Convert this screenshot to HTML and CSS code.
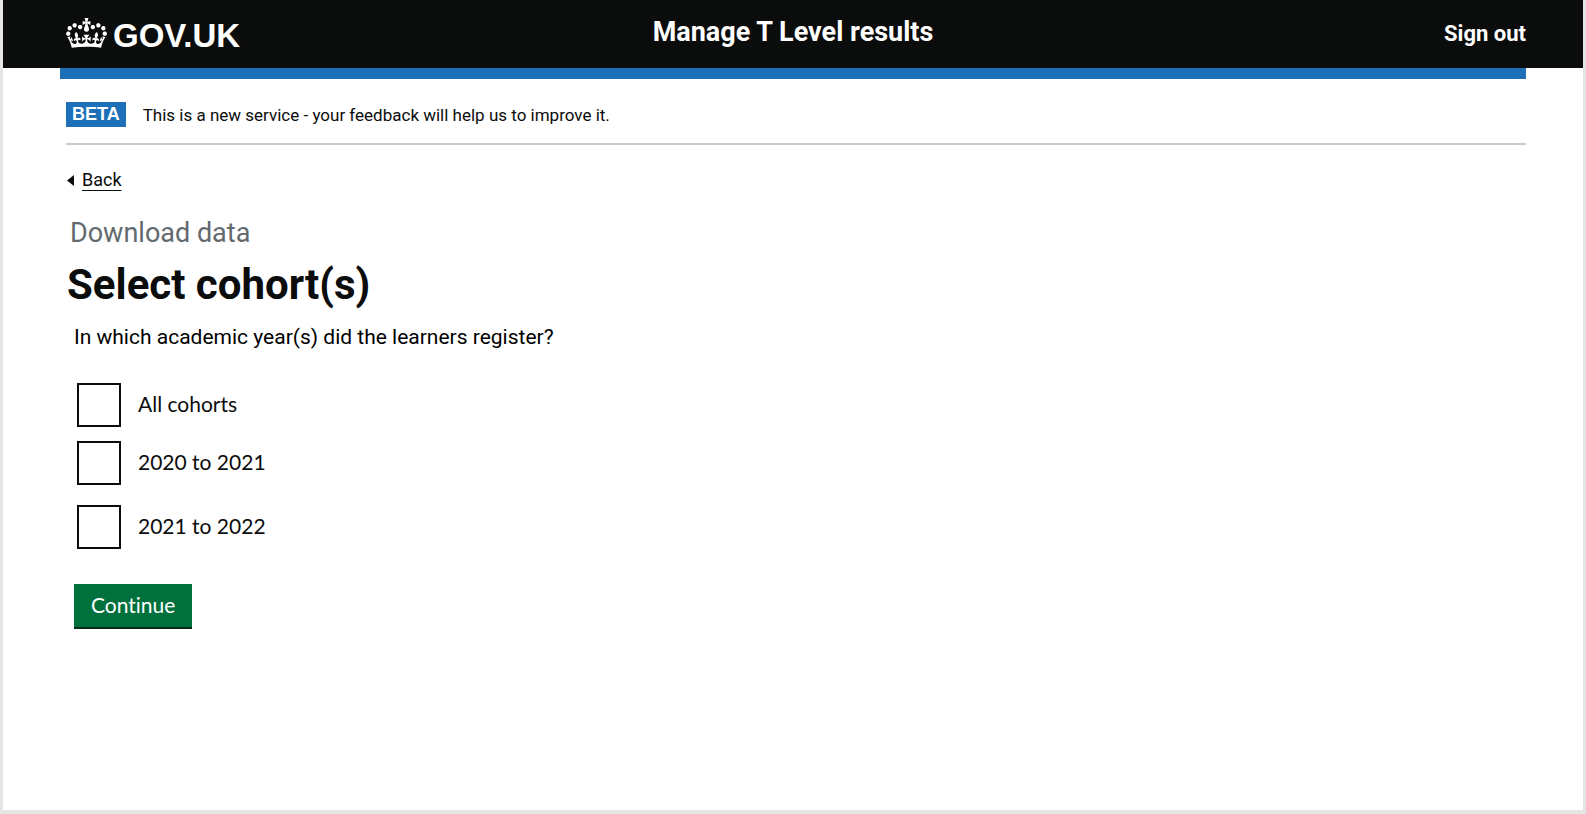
FILE: index.html
```html
<!DOCTYPE html>
<html lang="en">
<head>
<meta charset="utf-8">
<meta name="viewport" content="width=device-width, initial-scale=1">
<title>Select cohort(s) - Manage T Level results</title>
<link rel="stylesheet" href="styles.css">
</head>
<body class="page">
<header class="header">
  <div class="header-inner">
    <a class="logo" href="#">
      <svg class="crown" viewBox="0 0 132 97" aria-hidden="true"><path fill="currentColor" fill-rule="evenodd" d="M25 30.2c3.5 1.5 7.7-.2 9.1-3.7 1.5-3.6-.2-7.8-3.9-9.2-3.6-1.4-7.6.3-9.1 3.9-1.4 3.5.3 7.5 3.9 9zM9 39.5c3.6 1.5 7.8-.2 9.2-3.7 1.5-3.6-.2-7.8-3.9-9.1-3.6-1.5-7.6.2-9.1 3.8-1.4 3.5.3 7.5 3.8 9zM4.4 57.2c3.5 1.5 7.7-.2 9.1-3.8 1.5-3.6-.2-7.7-3.9-9.1-3.5-1.5-7.6.3-9.1 3.8-1.4 3.5.3 7.6 3.9 9.1zm38.3-21.4c3.5 1.5 7.7-.2 9.1-3.8 1.5-3.6-.2-7.7-3.9-9.1-3.6-1.5-7.6.3-9.1 3.8-1.3 3.6.4 7.7 3.9 9.1zm64.4-5.6c-3.6 1.5-7.8-.2-9.1-3.7-1.5-3.6.2-7.8 3.8-9.2 3.6-1.4 7.7.3 9.2 3.9 1.3 3.5-.4 7.5-3.9 9zm15.9 9.3c-3.6 1.5-7.7-.2-9.1-3.7-1.5-3.6.2-7.8 3.7-9.1 3.6-1.5 7.7.2 9.2 3.8 1.5 3.5-.3 7.5-3.8 9zm4.7 17.7c-3.6 1.5-7.8-.2-9.2-3.8-1.5-3.6.2-7.7 3.9-9.1 3.6-1.5 7.7.3 9.2 3.8 1.3 3.5-.4 7.6-3.9 9.1zM89.3 35.8c-3.6 1.5-7.8-.2-9.2-3.8-1.4-3.6.2-7.7 3.9-9.1 3.6-1.5 7.7.3 9.2 3.8 1.4 3.6-.3 7.7-3.9 9.1zM69.7 17.7l8.9 4.7V9.3l-8.9 2.8c-.2-.3-.5-.6-.9-.9L72.4 0H59.6l3.5 11.2c-.3.3-.6.5-.9.9l-8.8-2.8v13.1l8.8-4.7c.3.3.6.7.9.9l-5 15.4v.1c-.2.8-.4 1.6-.4 2.4 0 4.1 3.1 7.5 7 8.1h.2c.3 0 .7.1 1 .1.4 0 .7 0 1-.1h.2c4-.6 7.1-4.1 7.1-8.1 0-.8-.1-1.7-.4-2.4V34l-5.1-15.4c.4-.2.7-.6 1-.9zM66 92.8c16.9 0 32.8 1.1 47.1 3.2 4-16.9 8.9-26.7 14-33.5l-9.6-3.4c1 4.9 1.1 7.2 0 10.2-1.5-1.4-3-4.3-4.2-8.7L108.6 76c2.8-2 5-3.2 7.5-3.3-4.4 9.4-10 11.9-13.6 11.2-4.3-.8-6.3-4.6-5.6-7.9 1-4.7 5.7-5.9 8-.5 4.3-8.7-3-11.4-7.6-8.8 7.1-7.2 7.9-13.5 2.1-21.1-8 6.1-8.1 12.3-4.5 20.8-4.7-5.4-12.1-2.5-9.5 6.2 3.4-5.2 7.9-2 7.2 3.1-.6 4.3-6.4 7.8-13.5 7.2-10.3-.9-10.9-8-11.2-13.8 2.5-.5 7.1 1.8 11 7.3L80.2 60c-4.1 4.4-8 5.3-12.3 5.4 1.4-4.4 8-11.6 8-11.6H55.5s6.4 7.2 7.9 11.6c-4.2-.1-8-1-12.3-5.4l1.4 16.4c3.9-5.5 8.5-7.7 10.9-7.3-.3 5.8-.9 12.8-11.1 13.8-7.2.6-12.9-2.9-13.5-7.2-.7-5 3.8-8.3 7.1-3.1 2.7-8.7-4.6-11.6-9.4-6.2 3.7-8.5 3.6-14.7-4.6-20.8-5.8 7.6-5 13.9 2.2 21.1-4.7-2.6-11.9.1-7.7 8.8 2.3-5.5 7.1-4.2 8.1.5.7 3.3-1.3 7.1-5.7 7.9-3.5.7-9-1.8-13.5-11.2 2.5.1 4.7 1.3 7.5 3.3l-4.7-15.4c-1.2 4.4-2.7 7.2-4.3 8.7-1.1-3-.9-5.3 0-10.2l-9.5 3.4c5 6.9 9.9 16.7 14 33.5 14.8-2.1 30.8-3.2 47.7-3.2z"/></svg>
      <span>GOV.UK</span>
    </a>
    <a class="service-name" href="#">Manage T Level results</a>
    <a class="sign-out" href="#">Sign out</a>
  </div>
</header>
<div class="container">
  <div class="bar"></div>
  <div class="content">
    <div class="phase">
      <strong class="tag">BETA</strong>
      <span class="phase-text">This is a new service - your feedback will help us to improve it.</span>
    </div>
    <a class="back" href="#"><svg class="back-arrow" viewBox="0 0 7 11" aria-hidden="true"><path fill="currentColor" d="M7 0v11L0 5.500z"/></svg><span class="back-text">Back</span></a>
    <main class="main">
      <p class="caption">Download data</p>
      <h1 class="title">Select cohort(s)</h1>
      <form class="form">
        <fieldset class="cohorts">
          <legend class="question">In which academic year(s) did the learners register?</legend>
          <div class="choice"><input class="box" type="checkbox" id="all"><label class="label" for="all">All cohorts</label></div>
          <div class="choice"><input class="box" type="checkbox" id="y2020"><label class="label" for="y2020">2020 to 2021</label></div>
          <div class="choice choice-last"><input class="box" type="checkbox" id="y2021"><label class="label" for="y2021">2021 to 2022</label></div>
        </fieldset>
        <button class="button" type="button">Continue</button>
      </form>
    </main>
  </div>
</div>
</body>
</html>
```
FILE: styles.css
```css
*, *::before, *::after { box-sizing: border-box; }

.page {
  margin: 0;
  min-height: 100vh;
  border: solid #e5e5e5;
  border-width: 0 3px 4px;
  background: #fff;
  color: #0b0c0c;
  font-family: Roboto, "Liberation Sans", sans-serif;
}

.header {
  padding: 0 57px;
  background: #0b0c0c;
  color: #fff;
}

.header-inner {
  display: grid;
  grid-template-columns: 1fr auto 1fr;
  align-items: start;
  min-height: 68px;
  padding-top: 16px;
}

.header a {
  color: inherit;
  font-weight: 700;
  text-decoration: none;
}

.logo {
  display: flex;
  justify-self: start;
  gap: 6px;
  padding: 2px 0 0 6px;
  font: 33px/36px "Liberation Sans", Arial, sans-serif;
}

.crown {
  width: 41px;
  height: 30px;
}

.service-name {
  font-size: 27px;
  line-height: 32px;
}

.sign-out {
  justify-self: end;
  padding-top: 2px;
  font-size: 22px;
  line-height: 32px;
}

.container { margin: 0 57px; }

.bar {
  height: 11px;
  background: #1d70b8;
}

.content { padding-left: 6px; }

.phase {
  display: flex;
  align-items: flex-start;
  gap: 17px;
  padding: 23px 0 14px;
  border-bottom: 2px solid #c8c9ca;
  font-size: 17px;
  line-height: 27px;
}

.tag {
  padding: 0 6px;
  background: #1d70b8;
  color: #fff;
  font-family: "Liberation Sans", Arial, sans-serif;
  font-size: 18px;
  line-height: 25px;
}

.back {
  display: inline-flex;
  align-items: center;
  gap: 8px;
  margin-top: 25px;
  padding-left: 1px;
  color: inherit;
  font-size: 18px;
  line-height: 20px;
  text-decoration: none;
}

.back-arrow {
  width: 7px;
  height: 11px;
}

.back-text {
  text-decoration: underline;
  text-decoration-thickness: 1px;
  text-underline-offset: 4px;
}

.main { padding: 27px 0 32px; }

.caption {
  margin: 0 0 12px;
  padding-left: 4px;
  color: #626a6e;
  font-size: 27px;
  line-height: 32px;
}

.title {
  margin: 0 0 14px;
  padding-left: 1px;
  font-size: 42px;
  line-height: 48px;
}

.form { padding-left: 8px; }

.cohorts {
  min-width: 0;
  margin: 0;
  padding: 0;
  border: 0;
}

.question {
  padding: 0 0 32px;
  color: #000;
  font-size: 21px;
  line-height: 28px;
}

.choice {
  display: flex;
  align-items: center;
  gap: 17px;
  margin-bottom: 14px;
  padding-left: 3px;
}

.choice-last { padding-top: 6px; }

.box {
  appearance: none;
  width: 44px;
  height: 44px;
  margin: 0;
  border: 2px solid #0b0c0c;
  background: #fff;
}

.box:checked { box-shadow: inset 0 0 0 10px #fff; background: #0b0c0c; }

.label {
  padding-bottom: 2px;
  font-family: Lato, sans-serif;
  font-size: 21px;
  line-height: 28px;
}

.button {
  margin-top: 21px;
  padding: 7px 17px 8px;
  border: 0;
  border-bottom: 2px solid #002d18;
  background: #00703c;
  color: #fff;
  font: 21px/28px Lato, sans-serif;
  font-variant-ligatures: none;
}
```
